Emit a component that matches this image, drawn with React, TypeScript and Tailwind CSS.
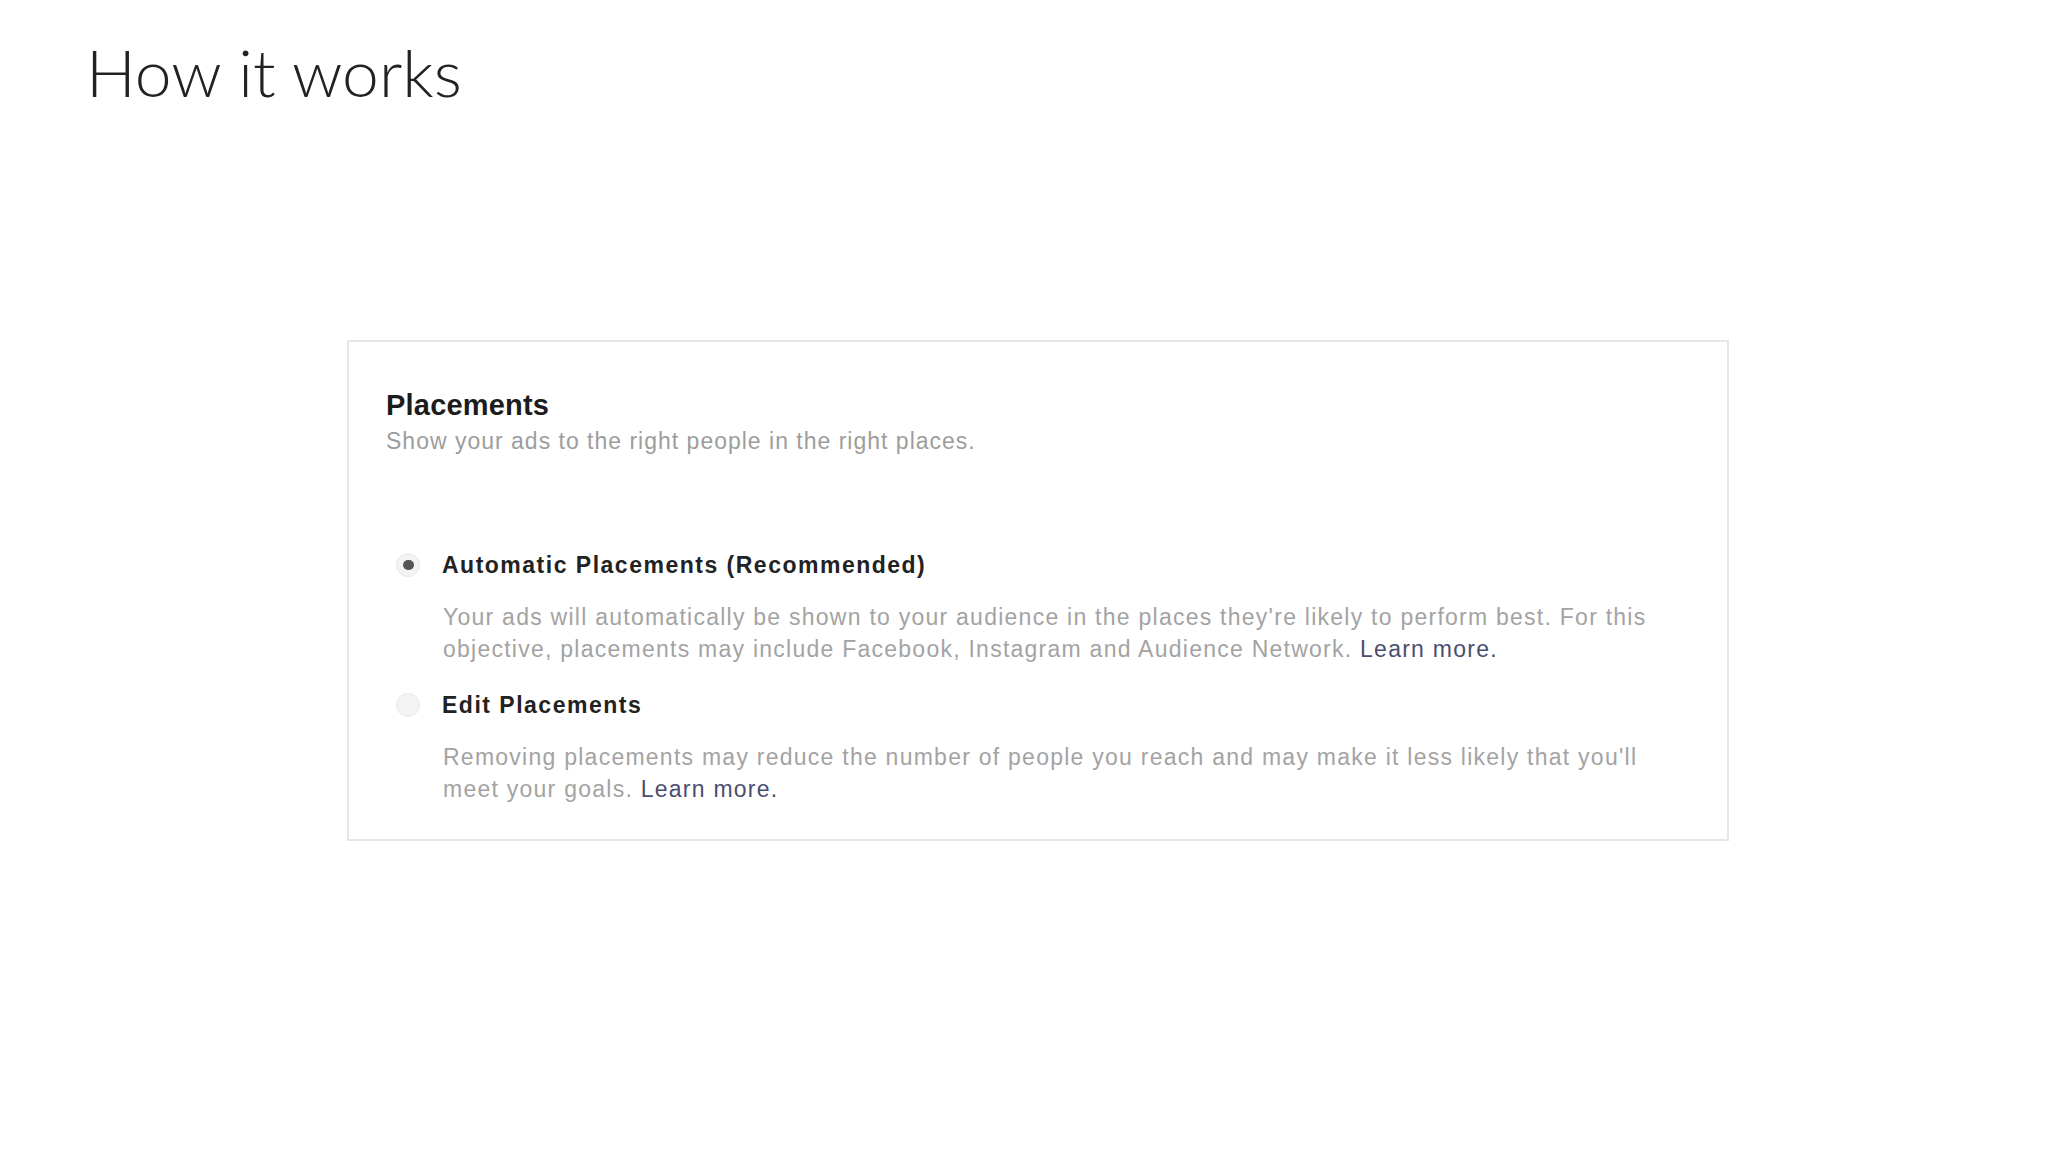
import React from "react";

const options = [
  {
    label: "Automatic Placements (Recommended)",
    checked: true,
    lines: [
      "Your ads will automatically be shown to your audience in the places they're likely to perform best. For this",
      "objective, placements may include Facebook, Instagram and Audience Network.",
    ],
  },
  {
    label: "Edit Placements",
    checked: false,
    lines: [
      "Removing placements may reduce the number of people you reach and may make it less likely that you'll",
      "meet your goals.",
    ],
  },
];

function Radio({ checked }: { checked: boolean }) {
  return (
    <div className="w-[24px] h-[24px] shrink-0 rounded-full bg-[#f3f3f3] border border-[#e9e9e9] flex items-center justify-center">
      {checked && <div className="w-[11px] h-[10px] rounded-full bg-[#555]" />}
    </div>
  );
}

export default function App() {
  return (
    <div className="min-h-screen w-full bg-white pt-[39px] font-['Liberation_Sans',Arial,sans-serif]">
      <h1 className="pl-[86px] font-['Lato',sans-serif] font-light text-[66px] leading-[65px] text-[#222]">
        How it works
      </h1>

      <div className="ml-[347px] mt-[236px] w-[1382px] border-2 border-[#e6e6e6] bg-white pt-[46px] pb-[34px] pl-[37px] pr-[30px]">
        <h2 className="text-[29px] leading-[34px] font-bold tracking-[0.2px] text-[#1c1c1c]">Placements</h2>
        <p className="mt-[4px] text-[23px] leading-[30px] tracking-[1px] text-[#9d9d9d]">
          Show your ads to the right people in the right places.
        </p>

        <div className="mt-[94px] flex flex-col">
          {options.map((opt, i) => (
            <div key={opt.label} className={i > 0 ? "mt-[25px]" : ""}>
              <div className="flex items-center pl-[10px] gap-[22px]">
                <Radio checked={opt.checked} />
                <span className="text-[23px] leading-[30px] tracking-[1.5px] font-bold text-[#222]">
                  {opt.label}
                </span>
              </div>
              <p className="mt-[21px] pl-[57px] text-[23px] leading-[32px] tracking-[1.25px] text-[#a3a3a3] whitespace-nowrap">
                {opt.lines[0]}
                <br />
                {opt.lines[1]}{" "}
                <a className="text-[#4b4e6f]">Learn more.</a>
              </p>
            </div>
          ))}
        </div>
      </div>
    </div>
  );
}
